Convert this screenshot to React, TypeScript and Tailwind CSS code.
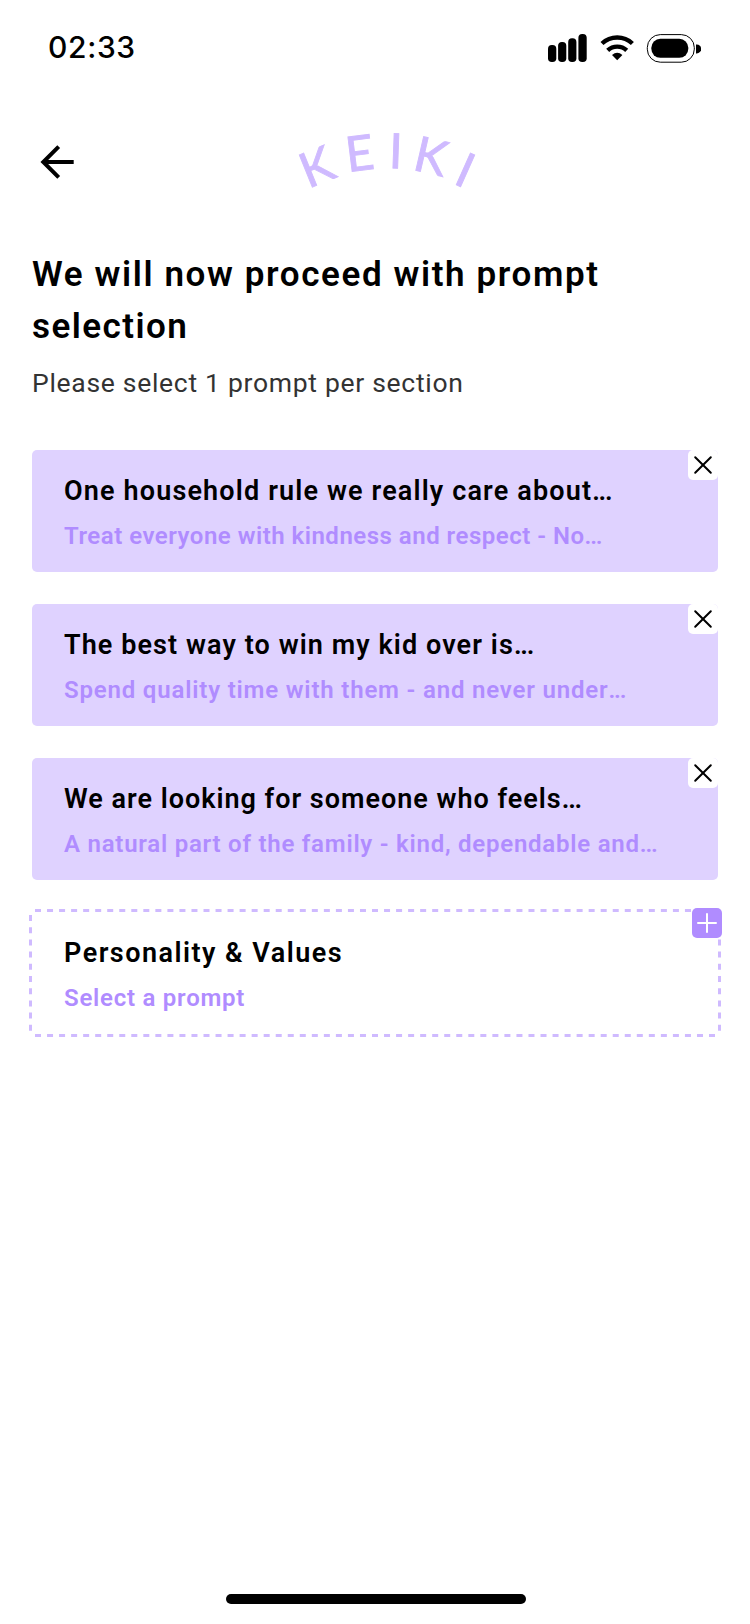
type Prompt = { title: string; answer: string; titleTracking: string; answerTracking: string };

const prompts: Prompt[] = [
  {
    title: 'One household rule we really care about',
    answer: 'Treat everyone with kindness and respect - No',
    titleTracking: 'tracking-[1.15px]',
    answerTracking: 'tracking-[0.5px]',
  },
  {
    title: 'The best way to win my kid over is',
    answer: 'Spend quality time with them - and never under',
    titleTracking: 'tracking-[1.08px]',
    answerTracking: 'tracking-[0.82px]',
  },
  {
    title: 'We are looking for someone who feels',
    answer: 'A natural part of the family - kind, dependable and',
    titleTracking: 'tracking-[0.99px]',
    answerTracking: 'tracking-[0.76px]',
  },
];

const logoLetters = [
  { char: 'K', x: 315, y: 186, angle: -22 },
  { char: 'E', x: 355, y: 171.2, angle: -7 },
  { char: 'I', x: 395.8, y: 168.2, angle: 2 },
  { char: 'K', x: 418.6, y: 171, angle: 13 },
  { char: 'I', x: 458.9, y: 186, angle: 24 },
];

function StatusBar() {
  return (
    <div className="flex h-[96px] items-start justify-between pt-[29px] pr-[49px] pl-[48px]">
      <span className="font-['Inter',sans-serif] text-[30px] leading-[36px] font-[540] tracking-[0.65px]">02:33</span>
      <svg width="154" height="30" viewBox="547 33 154 30" className="mt-[4px]">
        <rect x="548" y="45" width="8.3" height="17" rx="3.8" />
        <rect x="558.1" y="42" width="8.2" height="20" rx="3.8" />
        <rect x="568.2" y="38.3" width="8.2" height="23.7" rx="3.8" />
        <rect x="578.4" y="34" width="8.3" height="28" rx="3.8" />
        <g fill="none" stroke="#000" strokeWidth="4.4">
          <path d="M602 43.5a22.2 22.2 0 0 1 30.4 0" />
          <path d="M607.7 50.4a13.8 13.8 0 0 1 19 0" />
        </g>
        <path d="M612 55q5.2-4.4 10.4 0L617.2 60.2Z" />
        <rect x="647.3" y="34.6" width="47" height="27.6" rx="13" fill="none" stroke="#000" strokeWidth="1" />
        <rect x="651.3" y="38.8" width="37" height="19" rx="9" />
        <path d="M696 44.4h.7a4.4 4.4 0 0 1 0 9H696Z" />
      </svg>
    </div>
  );
}

function Header() {
  return (
    <header className="flex h-[153px] items-start">
      <svg width="36" height="36" viewBox="40 144 36 36" className="mt-[48px] ml-[40px]" fill="none" stroke="#000" strokeWidth="4">
        <path d="M73.7 162H43M58.7 146.7 43.3 162l15.4 15.3" />
      </svg>
      <svg
        width="190"
        height="70"
        viewBox="290 125 190 70"
        className="mt-[29px] ml-[214px] overflow-visible"
        fill="#cfbaff"
        stroke="#cfbaff"
        strokeWidth="0.9"
      >
        {logoLetters.map((l) => (
          <g key={l.x} transform={`translate(${l.x} ${l.y}) rotate(${l.angle})`}>
            <text x="-7.2" y="0" fontFamily="Lato, sans-serif" fontSize="48.5">
              {l.char}
            </text>
          </g>
        ))}
      </svg>
    </header>
  );
}

function PromptCard({ prompt }: { prompt: Prompt }) {
  return (
    <li className="relative h-[122px] rounded-[5px] bg-[#dfd2ff] pt-[21px] pl-8 whitespace-nowrap">
      <h2 className={`text-[27px] leading-[40px] font-semibold ${prompt.titleTracking}`}>
        {prompt.title}
        <span className="tracking-[-1.2px]">...</span>
      </h2>
      <p className={`mt-[7px] text-[24px] leading-[36px] font-semibold text-[#b08cff] ${prompt.answerTracking}`}>
        {prompt.answer}
        <span className="tracking-[-1.2px]">...</span>
      </p>
      <button aria-label="Remove" className="absolute top-0 right-0 size-[30px] rounded-[5px] bg-white">
        <svg width="30" height="30" viewBox="0 0 30 30" stroke="#000" strokeWidth="2" strokeLinecap="round">
          <path d="M7.2 7.2 22.8 22.8M22.8 7.2 7.2 22.8" />
        </svg>
      </button>
    </li>
  );
}

function EmptyCard() {
  return (
    <div className="relative mx-[29px] mt-[29px] h-[128px] pt-[24px] pl-[35px] whitespace-nowrap">
      <svg width="692" height="128" viewBox="0 0 692 128" className="absolute inset-0" fill="none" stroke="#cfbaff" strokeWidth="3">
        <path d="M6 1.5H686M6 126.5H686" strokeDasharray="6 6.036" />
        <path d="M1.5 6V122M690.5 6V122" strokeDasharray="6 6.2" />
      </svg>
      <h2 className="text-[27px] leading-[40px] font-semibold tracking-[1.48px]">Personality &amp; Values</h2>
      <p className="mt-[7px] text-[24px] leading-[36px] font-semibold tracking-[0.75px] text-[#b08cff]">Select a prompt</p>
      <button aria-label="Add" className="absolute -top-px -right-px size-[30px] rounded-[5px] bg-[#b08cff]">
        <svg width="30" height="30" viewBox="0 0 30 30" stroke="#fff" strokeWidth="2" strokeLinecap="round">
          <path d="M15 6V24M6 15H24" />
        </svg>
      </button>
    </div>
  );
}

export default function App() {
  return (
    <div className="flex h-[1624px] w-[750px] flex-col overflow-hidden bg-white font-['Roboto',sans-serif] text-black">
      <StatusBar />
      <Header />
      <section className="h-[201px] px-8 whitespace-nowrap">
        <h1 className="text-[35px] leading-[52px] font-semibold">
          <span className="block tracking-[1.61px]">We will now proceed with prompt</span>
          <span className="block tracking-[1.45px]">selection</span>
        </h1>
        <p className="mt-[10px] text-[26.5px] leading-[40px] tracking-[0.7px] text-[#333]">Please select 1 prompt per section</p>
      </section>
      <ul className="flex flex-col gap-8 px-8">
        {prompts.map((p) => (
          <PromptCard key={p.title} prompt={p} />
        ))}
      </ul>
      <EmptyCard />
      <div className="mt-auto mb-[20px] ml-[226px] h-[10px] w-[300px] rounded-full bg-black" />
    </div>
  );
}
